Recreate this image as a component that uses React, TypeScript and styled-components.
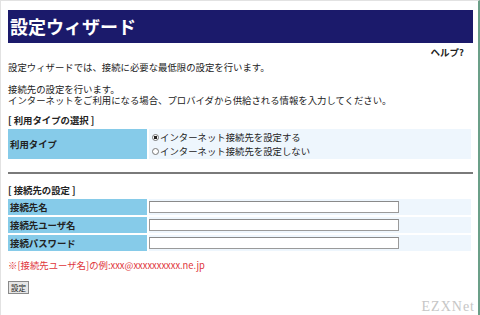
import React from "react";
import styled, { createGlobalStyle } from "styled-components";

const GlobalStyle = createGlobalStyle`
  html, body {
    margin: 0;
    padding: 0;
    background: #fff;
  }
  body {
    font-family: "Noto Sans CJK JP", "Liberation Sans", sans-serif;
    color: #222;
  }
`;

const Frame = styled.div`
  position: relative;
  box-sizing: border-box;
  width: 480px;
  height: 315px;
  padding: 9px 0 0 7px;
  border-top: 1px solid #e2e2e2;
  border-left: 1px solid #e2e2e2;
  border-right: 2px solid #6b9f88;
  overflow: hidden;
`;

const Content = styled.div`
  width: 465px;
  display: flex;
  flex-direction: column;
`;

const Banner = styled.h1`
  margin: 0;
  height: 33px;
  background: #1b1a6b;
  color: #fff;
  font-size: 18px;
  font-weight: 700;
  line-height: 33px;
  padding-left: 2px;
`;

const HelpLink = styled.div`
  align-self: flex-end;
  margin: 3px 9px 0 0;
  font-size: 9.5px;
  font-weight: 700;
  line-height: 12px;
`;

const Para = styled.p<{ $top: number }>`
  margin: ${(p) => p.$top}px 0 0;
  font-size: 9.4px;
  line-height: 11px;
`;

const ParaLine = styled.span`
  display: block;
  height: 11px;
  line-height: 11px;
`;

const SectionTitle = styled.div<{ $top: number }>`
  margin-top: ${(p) => p.$top}px;
  font-size: 9.4px;
  font-weight: 700;
  line-height: 11px;
`;

const Grid = styled.div`
  display: grid;
  grid-template-columns: 139px 322px;
  gap: 2px;
  margin-top: 3px;
`;

const Label = styled.div<{ $h: number }>`
  background: #86cbe9;
  height: ${(p) => p.$h}px;
  display: flex;
  align-items: center;
  padding-left: 2px;
  font-size: 9.4px;
  font-weight: 700;
`;

const Value = styled.div<{ $h: number }>`
  background: #eef6fd;
  height: ${(p) => p.$h}px;
  display: flex;
  flex-direction: column;
  justify-content: center;
`;

const RadioLine = styled.label`
  display: flex;
  align-items: center;
  font-size: 9.4px;
  line-height: 14px;
  padding-left: 3px;
`;

const Radio = styled.input`
  appearance: none;
  box-sizing: border-box;
  width: 7px;
  height: 7px;
  margin: 0 1px 0 0;
  border: 1px solid #777;
  border-radius: 50%;
  background: #fff;

  &:checked {
    background: radial-gradient(circle, #222 0 1.6px, #fff 2px);
  }
`;

const Rule = styled.hr`
  margin: 13px 0 0;
  border: none;
  border-top: 2px solid #7a7a7a;
  width: 465px;
`;

const TextInput = styled.input`
  box-sizing: border-box;
  width: 250px;
  height: 12px;
  margin: 0;
  border: 1px solid #9a9a9a;
  border-top-color: #8a8a8a;
  background: #fff;
  padding: 0;
`;

const Note = styled.div`
  margin-top: 9px;
  color: #e0353a;
  font-size: 9.4px;
  line-height: 11px;
`;

const SubmitButton = styled.button`
  align-self: flex-start;
  margin-top: 10px;
  box-sizing: border-box;
  width: 21px;
  height: 13px;
  padding: 0;
  border: 1px solid #8a8a8a;
  background: #e6e6e6;
  font-family: "Noto Sans CJK JP", sans-serif;
  font-size: 7.5px;
  line-height: 11px;
  color: #222;
`;

const Watermark = styled.div`
  position: absolute;
  right: 3px;
  bottom: 0;
  font-family: "Liberation Serif", serif;
  font-size: 14px;
  color: #c6c6c6;
  letter-spacing: 1px;
`;

const fields = ["接続先名", "接続先ユーザ名", "接続パスワード"];

export default function App() {
  return (
    <>
      <GlobalStyle />
      <Frame>
        <Content>
          <Banner>設定ウィザード</Banner>
          <HelpLink>ヘルプ?</HelpLink>
          <Para $top={4}>設定ウィザードでは、接続に必要な最低限の設定を行います。</Para>
          <Para $top={11}>
            <ParaLine>接続先の設定を行います。</ParaLine>
            <ParaLine>
              インターネットをご利用になる場合、プロバイダから供給される情報を入力してください。
            </ParaLine>
          </Para>
          <SectionTitle $top={9}>[ 利用タイプの選択 ]</SectionTitle>
          <Grid>
            <Label $h={30}>利用タイプ</Label>
            <Value $h={30}>
              <RadioLine>
                <Radio type="radio" name="type" defaultChecked />
                インターネット接続先を設定する
              </RadioLine>
              <RadioLine>
                <Radio type="radio" name="type" />
                インターネット接続先を設定しない
              </RadioLine>
            </Value>
          </Grid>
          <Rule />
          <SectionTitle $top={11}>[ 接続先の設定 ]</SectionTitle>
          <Grid>
            {fields.map((f) => (
              <React.Fragment key={f}>
                <Label $h={16}>{f}</Label>
                <Value $h={16}>
                  <TextInput type={f === "接続パスワード" ? "password" : "text"} />
                </Value>
              </React.Fragment>
            ))}
          </Grid>
          <Note>※[接続先ユーザ名]の例:xxx@xxxxxxxxxx.ne.jp</Note>
          <SubmitButton>設定</SubmitButton>
        </Content>
        <Watermark>EZXNet</Watermark>
      </Frame>
    </>
  );
}
